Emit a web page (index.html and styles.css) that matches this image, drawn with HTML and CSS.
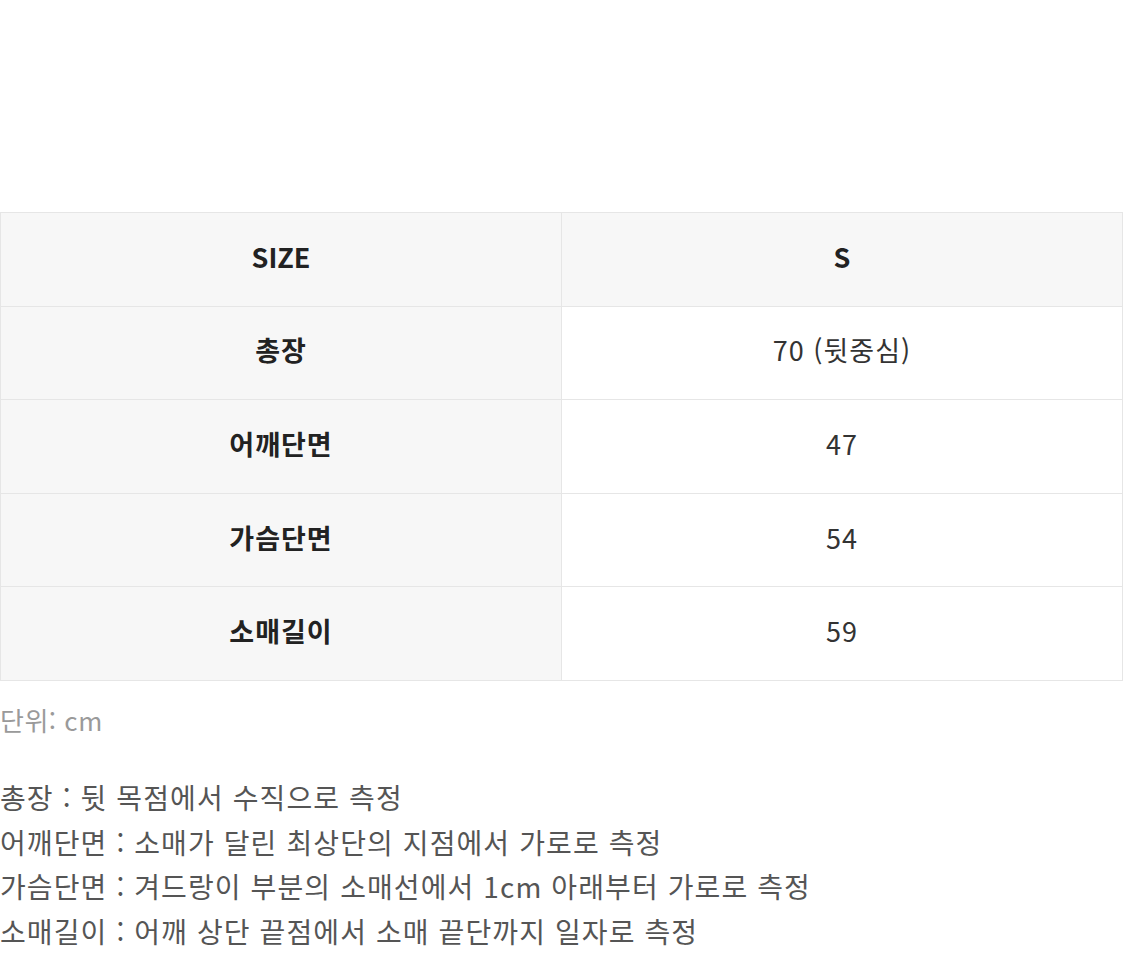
FILE: index.html
```html
<!DOCTYPE html>
<html lang="ko">
<head>
<meta charset="utf-8">
<title>Size</title>
<link rel="stylesheet" href="styles.css">
</head>
<body>
<div class="page">
  <table class="size-table">
    <tr class="head">
      <th>SIZE</th>
      <th>S</th>
    </tr>
    <tr>
      <th>총장</th>
      <td>70 (뒷중심)</td>
    </tr>
    <tr>
      <th>어깨단면</th>
      <td>47</td>
    </tr>
    <tr>
      <th>가슴단면</th>
      <td>54</td>
    </tr>
    <tr>
      <th>소매길이</th>
      <td>59</td>
    </tr>
  </table>
  <p class="unit">단위: cm</p>
  <ul class="notes">
    <li>총장 : 뒷 목점에서 수직으로 측정</li>
    <li>어깨단면 : 소매가 달린 최상단의 지점에서 가로로 측정</li>
    <li>가슴단면 : 겨드랑이 부분의 소매선에서 1cm 아래부터 가로로 측정</li>
    <li>소매길이 : 어깨 상단 끝점에서 소매 끝단까지 일자로 측정</li>
  </ul>
</div>
</body>
</html>
```

FILE: styles.css
```css
html, body {
  margin: 0;
  padding: 0;
  background: #ffffff;
}
body {
  font-family: "Noto Sans CJK KR", "Noto Sans", sans-serif;
  color: #333;
}
.page {
  padding-top: 212px;
}
.size-table {
  width: 1123px;
  border-collapse: collapse;
  table-layout: fixed;
}
.size-table th,
.size-table td {
  border: 1px solid #e6e6e6;
  height: 86.6px;
  padding: 0 0 6px 0;
  text-align: center;
  vertical-align: middle;
  font-size: 27px;
  line-height: 1;
  letter-spacing: 1px;
}
.size-table th {
  width: 560px;
  background: #f7f7f7;
  color: #222;
  font-weight: 700;
}
.size-table td {
  background: #fff;
  color: #333;
  font-weight: 400;
}
.size-table .head th {
  background: #f7f7f7;
  letter-spacing: 0;
}
.unit {
  margin: 24px 0 0 0;
  font-size: 26px;
  line-height: 30px;
  color: #9a9a9a;
  letter-spacing: 0.5px;
}
.notes {
  list-style: none;
  margin: 40px 0 0 0;
  padding: 0;
  font-size: 28px;
  line-height: 44.7px;
  color: #555;
  letter-spacing: 1.1px;
}
.notes li {
  margin: 0;
}
```
